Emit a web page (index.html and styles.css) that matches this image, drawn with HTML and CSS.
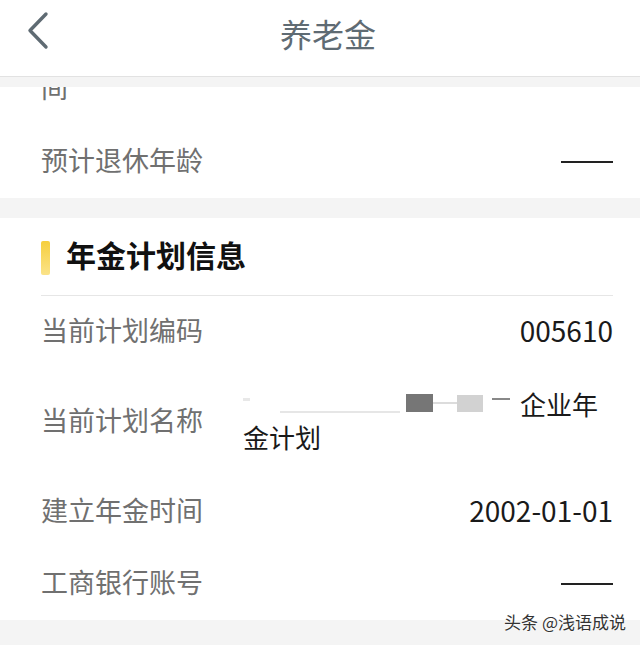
FILE: index.html
```html
<!DOCTYPE html>
<html lang="zh-CN">
<head>
    <meta charset="UTF-8">
    <meta name="viewport" content="width=device-width, initial-scale=1.0">
    <title>养老金</title>
    <link rel="stylesheet" href="styles.css">
</head>
<body>
    <header class="topbar">
        <svg class="back" width="24" height="40" viewBox="0 0 24 40">
            <path d="M20 3 L4 19.5 L20 36" fill="none" stroke="#5f6b73" stroke-width="3.4" stroke-linecap="round" stroke-linejoin="round"/>
        </svg>
        <h1>养老金</h1>
    </header>

    <section class="card first">
        <div class="row cut"><span class="label">间</span></div>
        <div class="row">
            <span class="label">预计退休年龄</span>
            <span class="dash"></span>
        </div>
    </section>

    <section class="card">
        <div class="sec-head">
            <span class="bar"></span>
            <h2>年金计划信息</h2>
        </div>
        <div class="row">
            <span class="label">当前计划编码</span>
            <span class="value">005610</span>
        </div>
        <div class="row tall">
            <span class="label">当前计划名称</span>
            <div class="value wrap">
                <div class="line">
                    <span class="blur">
                        <i class="b-dot"></i>
                        <i class="b-line"></i>
                        <i class="b-dark"></i>
                        <i class="b-mid"></i>
                        <i class="b-light"></i>
                        <i class="b-dash"></i>
                    </span>企业年
                </div>
                <div class="line">金计划</div>
            </div>
        </div>
        <div class="row">
            <span class="label">建立年金时间</span>
            <span class="value">2002-01-01</span>
        </div>
        <div class="row">
            <span class="label">工商银行账号</span>
            <span class="dash"></span>
        </div>
    </section>

    <div class="footer-band"></div>
    <div class="watermark">头条 @浅语成说</div>
</body>
</html>
```

FILE: styles.css
```css
body {
    margin: 0;
    height: 645px;
    overflow: hidden;
    background: #f4f4f4;
    font-family: "Noto Sans CJK SC", "Noto Sans", sans-serif;
    position: relative;
}
.topbar {
    height: 77px;
    box-sizing: border-box;
    background: #fff;
    border-bottom: 1px solid #e2e2e2;
    display: flex;
    align-items: flex-start;
    justify-content: center;
    position: relative;
    z-index: 2;
}
.topbar h1 {
    margin: 11px 0 0 16px;
    font-size: 32px;
    line-height: 44px;
    font-weight: 400;
    color: #5f6b73;
}
.back {
    position: absolute;
    left: 26px;
    top: 11px;
}
.card {
    background: #fff;
    padding: 0 27px 0 41px;
}
.card.first {
    margin-top: 10px;
    margin-bottom: 20px;
}
.row {
    height: 72px;
    display: flex;
    align-items: center;
    justify-content: space-between;
}
.row.cut {
    height: 39px;
    overflow: hidden;
    align-items: flex-start;
}
.row.cut .label {
    margin: -36px 0 0;
    line-height: 72px;
}
.row.tall {
    height: 108px;
}
.label {
    font-size: 27px;
    color: #707070;
    margin-bottom: 5px;
}
.value {
    font-size: 28px;
    color: #1a1a1a;
    margin-bottom: 5px;
}
.dash {
    width: 52px;
    height: 2px;
    background: #222;
}
.sec-head {
    height: 77px;
    display: flex;
    align-items: center;
    border-bottom: 1px solid #e6e6e6;
}
.bar {
    width: 9px;
    height: 34px;
    border-radius: 2px;
    background: linear-gradient(#f6cf3d, #fbe389);
    margin: 2px 16px 0 0;
}
.sec-head h2 {
    margin: 0 0 5px;
    font-size: 30px;
    font-weight: 700;
    color: #111;
}
.wrap {
    width: 370px;
    font-size: 26px;
    line-height: 33px;
}
.line {
    display: flex;
    align-items: center;
    height: 33px;
}
.blur {
    width: 277px;
    height: 30px;
    display: flex;
    align-items: center;
    filter: blur(0.6px);
}
.blur i {
    display: block;
    flex: none;
}
.b-dot {
    width: 7px;
    height: 3px;
    background: #e8e8e8;
    margin-top: -8px;
}
.b-line {
    width: 120px;
    height: 2px;
    margin: 18px 0 0 30px;
    background: #e6e6e6;
}
.b-dark {
    width: 27px;
    height: 18px;
    margin-left: 6px;
    background: #767676;
}
.b-mid {
    width: 24px;
    height: 2px;
    background: #dcdcdc;
}
.b-light {
    width: 26px;
    height: 17px;
    background: #d2d2d2;
}
.b-dash {
    width: 18px;
    height: 2px;
    margin: -8px 10px 0 9px;
    background: #888;
}
.footer-band {
    height: 25px;
}
.watermark {
    position: absolute;
    right: 14px;
    top: 609px;
    font-size: 17px;
    color: #333;
    text-shadow: 0 0 2px #fff, 0 0 2px #fff;
}
```
